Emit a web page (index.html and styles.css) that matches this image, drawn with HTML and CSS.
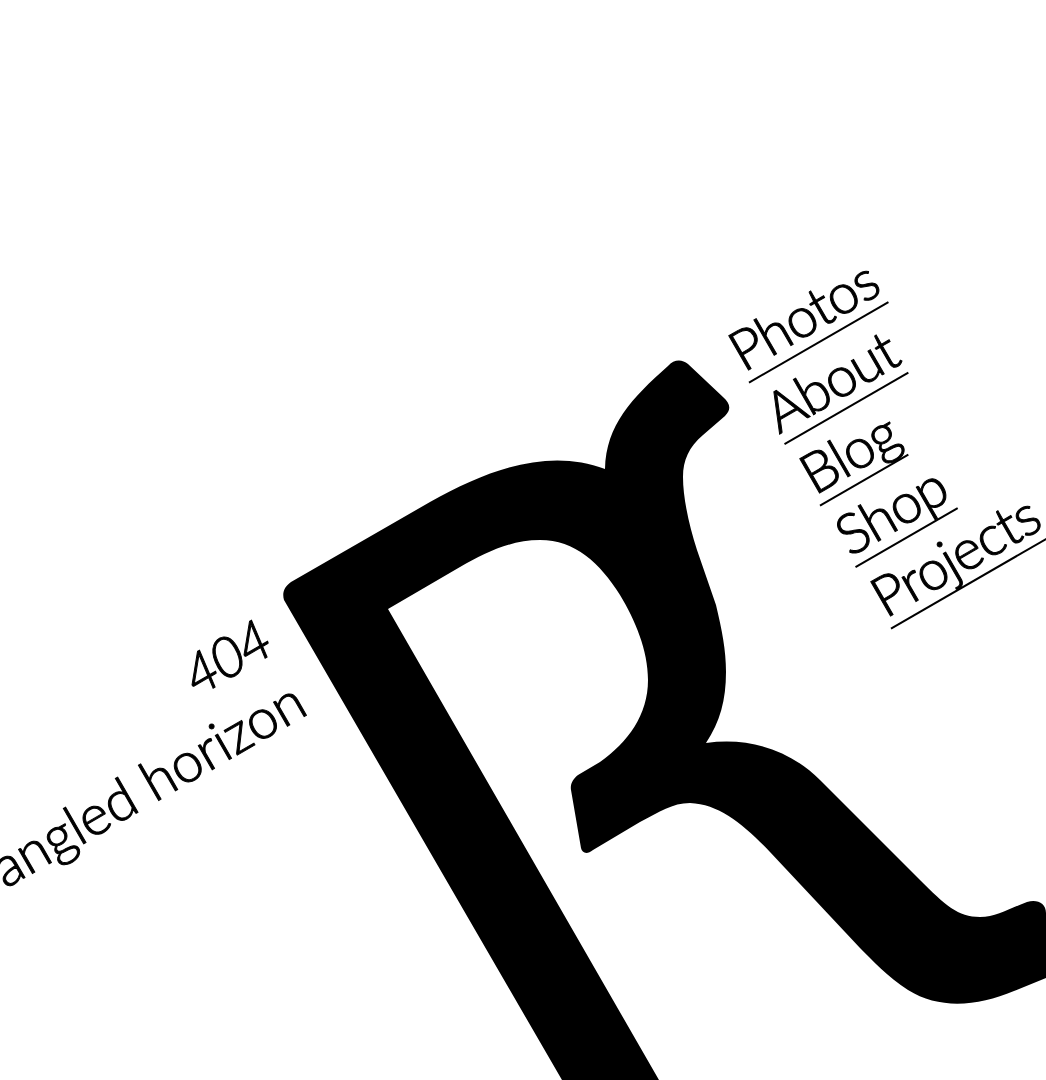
FILE: index.html
```html
<!DOCTYPE html>
<html lang="en">
<head>
    <meta charset="UTF-8">
    <meta name="viewport" content="width=device-width, initial-scale=1.0">
    <title>404 - angled horizon</title>
    <link rel="stylesheet" href="styles.css">
</head>
<body>
    <div class="stage">
        <svg class="logo" viewBox="0 0 1046 1080" width="1046" height="1080" role="img" aria-label="Logo">
            <path d="M284 600 C282 593 284 587 291 582 L430 502 C490 468 550 448 605 469 C606 425 632 398 668 366 C674 359 682 359 688 364 L723 397 C731 404 731 410 725 416 L703 435 C689 447 683 460 683 477 C683 498 689 525 697 550 L716 605 C722 630 726 650 726 672 C726 700 720 722 706 743 C750 737 790 750 820 780 L920 880 C945 905 958 917 980 917 C997 917 1010 908 1027 902 C1037 899 1046 903 1046 913 L1046 978 L1014 991 C978 1006 940 1010 908 990 C888 977 872 960 860 948 L770 852 C745 826 720 804 690 803 C672 803 660 812 640 822 L593 850 C587 855 582 853 581 848 L571 790 C570 784 573 779 578 775 L600 762 C628 742 648 715 648 680 C648 650 635 620 620 595 C600 563 575 540 540 540 C510 540 485 553 460 567 L388 609 L659 1080 L562 1080 Z"/>
        </svg>

        <div class="caption">
            <p class="code">404</p>
            <p>angled horizon</p>
        </div>

        <ul class="nav">
            <li><a href="#">Photos</a></li>
            <li><a href="#">About</a></li>
            <li><a href="#">Blog</a></li>
            <li><a href="#">Shop</a></li>
            <li><a href="#">Projects</a></li>
        </ul>
    </div>
</body>
</html>
```

FILE: styles.css
```css
body {
    margin: 0;
    background-color: white;
    color: black;
    font-family: Lato, sans-serif;
    font-weight: 300;
    font-size: 56px;
    -webkit-text-stroke: 1px black;
}
.stage {
    position: relative;
    width: 1046px;
    height: 1080px;
    overflow: hidden;
}
.logo {
    position: absolute;
    left: 0;
    top: 0;
    display: block;
}
.caption {
    position: absolute;
    right: 799px;
    top: 604px;
    line-height: 70px;
    letter-spacing: -0.2px;
    text-align: right;
    white-space: nowrap;
    transform: rotate(-30deg);
    transform-origin: 100% 0;
}
.caption p {
    margin: 0;
}
.code {
    font-style: italic;
    letter-spacing: -2.5px;
}
.nav {
    position: absolute;
    left: 714px;
    top: 322px;
    margin: 0;
    padding: 0;
    list-style: none;
    line-height: 76px;
    letter-spacing: -1.1px;
    white-space: nowrap;
    transform: rotate(-30deg);
    transform-origin: 0 0;
}
.nav li {
    display: flex;
    height: 71px;
}
.nav a {
    display: block;
    height: 69px;
    color: black;
    text-decoration: none;
    border-bottom: 2px solid black;
}
```
